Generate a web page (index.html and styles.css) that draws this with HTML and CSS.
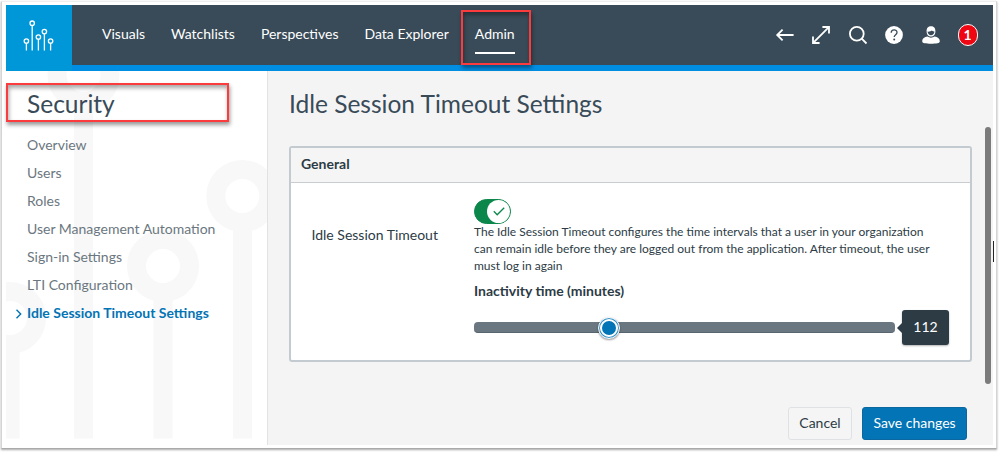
FILE: index.html
```html
<!DOCTYPE html>
<html lang="en">
<head>
    <meta charset="UTF-8">
    <meta name="viewport" content="width=device-width, initial-scale=1.0">
    <title>Idle Session Timeout Settings</title>
    <link rel="stylesheet" href="styles.css">
</head>
<body>
    <div class="frame">
        <header class="topbar">
            <a href="#" class="logo">
                <svg width="65" height="65" viewBox="6 5 65 65" fill="none" stroke="#fff" stroke-width="1.3">
                    <circle cx="26.4" cy="41" r="2.2"/>
                    <circle cx="32.2" cy="23.2" r="2.2"/>
                    <circle cx="38.4" cy="37" r="2.2"/>
                    <circle cx="44.4" cy="31.6" r="2.2"/>
                    <circle cx="50.6" cy="41" r="2.2"/>
                    <path d="M26.4 43.2v7.4M32.2 25.4v25.2M38.4 39.2v11.4M44.4 33.8v16.8M50.6 43.2v7.4"/>
                </svg>
            </a>
            <nav class="nav">
                <a href="#">Visuals</a>
                <a href="#">Watchlists</a>
                <a href="#">Perspectives</a>
                <a href="#">Data Explorer</a>
                <a href="#" class="active">Admin</a>
            </nav>
            <div class="tools">
                <svg width="20" height="20" viewBox="0 0 20 20" fill="none" stroke="#fff" stroke-width="1.8">
                    <path d="M18.6 10H2M7.6 4.6L2.2 10l5.4 5.4"/>
                </svg>
                <svg width="20" height="20" viewBox="0 0 20 20" fill="none" stroke="#fff" stroke-width="1.8">
                    <path d="M2.4 17.6L17.6 2.4M11.4 2H18v6.6M2 11.4V18h6.6"/>
                </svg>
                <svg width="20" height="20" viewBox="0 0 20 20" fill="none" stroke="#fff" stroke-width="1.8">
                    <circle cx="8.8" cy="8.8" r="6.9"/>
                    <path d="M13.7 13.7l4.8 4.8"/>
                </svg>
                <svg width="20" height="20" viewBox="0 0 20 20">
                    <circle cx="10" cy="10" r="8.9" fill="#fff"/>
                    <path d="M7.2 7.7c0-3.6 5.8-3.6 5.8-.3 0 2.3-2.8 2.2-2.8 4.6" fill="none" stroke="#394b58" stroke-width="1.3"/>
                    <circle cx="10.2" cy="14.4" r="1" fill="#394b58"/>
                </svg>
                <svg width="20" height="20" viewBox="0 0 20 20">
                    <path d="M5.6 6.4C5.4 3.2 7.3 1.3 10 1.3s4.6 1.9 4.4 5.1c0 2.8-1.9 5.2-4.4 5.2S5.6 9.2 5.6 6.4z" fill="#fff"/>
                    <path d="M6.6 6.6c1.4.2 3.2-.2 4.2-1 .7.7 1.6 1 2.6 1 0 2-1.4 3.7-3.4 3.7s-3.4-1.7-3.4-3.7z" fill="#394b58"/>
                    <path d="M1.2 16c0-2.4 2.4-3.8 5.2-4.4 1.900 1.500 5.300 1.500 7.200 0 2.800.6 5.200 2 5.200 4.400 0 1.400-.8 1.900-2.400 2.200-3.500.6-9.300.6-12.800 0C2 17.900 1.200 17.400 1.200 16z" fill="#fff"/>
                </svg>
                <span class="count">1</span>
            </div>
            <div class="highlight highlight-admin"></div>
        </header>

        <div class="content">
            <aside class="sidebar">
                <svg class="pattern" width="261" height="375" viewBox="6 70 261 375">
                    <g fill="none" stroke="#f8f8f8" stroke-width="19">
                        <circle cx="83.5" cy="74" r="26.5"/>
                        <circle cx="242.3" cy="195" r="26.5"/>
                        <circle cx="163" cy="265" r="26.5"/>
                        <circle cx="10" cy="317" r="26.5"/>
                        <path d="M83.5 100v337.6M242.5 221v216.6M163 291v146.6M10 343v94.6"/>
                    </g>
                </svg>
                <h2>Security</h2>
                <ul class="menu">
                    <li><a href="#">Overview</a></li>
                    <li><a href="#">Users</a></li>
                    <li><a href="#">Roles</a></li>
                    <li><a href="#">User Management Automation</a></li>
                    <li><a href="#">Sign-in Settings</a></li>
                    <li><a href="#">LTI Configuration</a></li>
                    <li class="current">
                        <svg class="chevron" width="8" height="10" viewBox="0 0 8 10" fill="none" stroke="#0374b5" stroke-width="1.4">
                            <path d="M1.5.8L5.7 5 1.5 9.2"/>
                        </svg>
                        <a href="#">Idle Session Timeout Settings</a>
                    </li>
                </ul>
                <div class="highlight highlight-security"></div>
            </aside>

            <main class="main">
                <h1>Idle Session Timeout Settings</h1>
                <section class="card">
                    <h3>General</h3>
                    <div class="card-body">
                        <div class="field-label">Idle Session Timeout</div>
                        <div class="field">
                            <div class="toggle">
                                <span class="knob">
                                    <svg width="12" height="9" viewBox="0 0 12 9" fill="none" stroke="#0b874b" stroke-width="1.3">
                                        <path d="M.8 4.3l3.4 3.5 7-7"/>
                                    </svg>
                                </span>
                            </div>
                            <p>The Idle Session Timeout configures the time intervals that a user in your organization<br>can remain idle before they are logged out from the application. After timeout, the user<br>must log in again</p>
                            <h4>Inactivity time (minutes)</h4>
                            <div class="slider-row">
                                <div class="track">
                                    <span class="handle"></span>
                                </div>
                                <span class="value">112</span>
                            </div>
                        </div>
                    </div>
                </section>
                <div class="actions">
                    <button class="btn">Cancel</button>
                    <button class="btn btn-primary">Save changes</button>
                </div>
                <div class="scrollbar"></div>
                <div class="caret"></div>
            </main>
        </div>
    </div>
</body>
</html>
```
FILE: styles.css
```css
* {
    margin: 0;
    padding: 0;
    box-sizing: border-box;
}
body {
    font-family: Lato, "Liberation Sans", sans-serif;
    font-size: 14px;
    color: #2d3b45;
    background: #fff;
    padding: 1px 2px 3px 1px;
    height: 452px;
    overflow: hidden;
}
a {
    color: inherit;
    text-decoration: none;
}
.frame {
    height: 448px;
    border: 1px solid #d4d4d4;
    border-top-color: #eee;
    border-bottom-color: #aaa;
    box-shadow: 0 1px 2px rgba(0, 0, 0, 0.35);
    padding: 3px 3px 3px 4px;
    background: #fff;
}

/* Top bar */
.topbar {
    position: relative;
    display: flex;
    align-items: stretch;
    height: 66px;
    background: #394b58;
    border-bottom: 6px solid #008ee2;
}
.logo {
    width: 66px;
    height: 66px;
    background: #0097d8;
}
.logo svg {
    display: block;
}
.nav {
    display: flex;
    gap: 26px;
    padding: 18px 0 0 30px;
    color: #fff;
    flex: 1;
}
.nav a {
    height: 31px;
    line-height: 22px;
}
.nav .active {
    border-bottom: 2px solid #fff;
}
.tools {
    display: flex;
    align-items: center;
    gap: 16.6px;
    padding-right: 15.5px;
}
.count {
    width: 20px;
    height: 22px;
    border: 1px solid #fff;
    border-radius: 10px;
    background: #ee0612;
    color: #fff;
    font-weight: bold;
    line-height: 19px;
    text-align: center;
}

/* Red callout boxes */
.highlight {
    position: absolute;
    border: 2px solid #fb3b3e;
    box-shadow: 1px 3px 4px rgba(0, 0, 0, 0.4), inset 1px 3px 4px rgba(0, 0, 0, 0.35);
}
.highlight-admin {
    left: 455px;
    top: 5px;
    width: 70px;
    height: 55px;
    z-index: 2;
}
.highlight-security {
    left: 0;
    top: 12px;
    width: 223px;
    height: 39px;
}

.content {
    display: flex;
    height: 374px;
}

/* Sidebar */
.sidebar {
    position: relative;
    width: 262px;
    border-right: 1px solid #e0e2e4;
    padding: 19px 0 0 21px;
}
.pattern {
    position: absolute;
    left: 0;
    top: 0;
}
.sidebar h2 {
    position: relative;
    color: #394b58;
    font-size: 24.5px;
    font-weight: 400;
    line-height: 27px;
}
.menu {
    position: relative;
    list-style: none;
    margin-top: 14px;
}
.menu li {
    line-height: 28px;
    height: 28px;
    color: #6b7780;
    white-space: nowrap;
}
.menu .current {
    position: relative;
    color: #0374b5;
    font-weight: bold;
}
.chevron {
    position: absolute;
    left: -12px;
    top: 10px;
}

/* Main area */
.main {
    position: relative;
    flex: 1;
    background: #f4f4f4;
    padding: 19px 21px 0;
}
.main h1 {
    color: #394b58;
    font-size: 24.5px;
    font-weight: 400;
    line-height: 27px;
}
.card {
    margin-top: 29px;
    height: 216px;
    border: 2px solid #c4cbd0;
    border-radius: 3px;
    background: #fff;
}
.card h3 {
    height: 35px;
    line-height: 32px;
    padding-left: 10px;
    font-size: 14px;
    background: #f5f5f5;
    border-bottom: 1px solid #c7cdd1;
}
.card-body {
    display: flex;
    padding-top: 16px;
}
.field-label {
    width: 183px;
    padding: 26px 0 0 20.5px;
    line-height: 20px;
}
.toggle {
    width: 37px;
    height: 25px;
    border-radius: 13px;
    border: 1px solid #0b874b;
    background: #0b874b;
    display: flex;
    justify-content: flex-end;
}
.knob {
    display: flex;
    align-items: center;
    justify-content: center;
    width: 23px;
    height: 23px;
    border-radius: 50%;
    background: #fff;
}
.field p {
    margin-top: -1px;
    font-size: 12px;
    line-height: 17px;
    white-space: nowrap;
}
.field h4 {
    margin-top: 7px;
    font-size: 14px;
    line-height: 20px;
}
.slider-row {
    display: flex;
    align-items: center;
    gap: 7px;
    margin-top: 9px;
}
.track {
    position: relative;
    width: 421px;
    height: 11px;
    border-radius: 4px;
    background: #6b7780;
    border-bottom: 1px solid #566570;
}
.handle {
    position: absolute;
    left: 124px;
    top: -5px;
    width: 22px;
    height: 22px;
    border-radius: 50%;
    border: 1px solid #fff;
    background: #0374b5;
    box-shadow: inset 0 0 0 1px #2b8bc2, inset 0 0 0 3px #fff, 0 1px 2px rgba(0, 0, 0, 0.4);
}
.value {
    position: relative;
    width: 47px;
    height: 35px;
    border-radius: 3px;
    background: #2d3b45;
    color: #fff;
    line-height: 33px;
    text-align: center;
    box-shadow: 0 1px 2px rgba(0, 0, 0, 0.3);
}
.value::before {
    content: "";
    position: absolute;
    left: -5px;
    top: 13px;
    border: 5px solid transparent;
    border-left: 0;
    border-right-color: #2d3b45;
}
.actions {
    display: flex;
    justify-content: flex-end;
    gap: 10px;
    margin-top: 45px;
    padding-right: 5px;
}
.btn {
    width: 64px;
    height: 33px;
    padding-bottom: 2px;
    border: 1px solid #dfe2e4;
    border-radius: 3px;
    background: #f5f5f5;
    color: #2d3b45;
    font: inherit;
}
.btn-primary {
    width: 105px;
    background: #0374b5;
    border-color: #0c67a0;
    color: #fff;
}
.scrollbar {
    position: absolute;
    right: 2px;
    top: 56px;
    width: 6px;
    height: 257px;
    border-radius: 3px;
    background: #7b7b7b;
}
.caret {
    position: absolute;
    right: -1px;
    top: 170px;
    width: 1px;
    height: 21px;
    background: #222;
}
```
